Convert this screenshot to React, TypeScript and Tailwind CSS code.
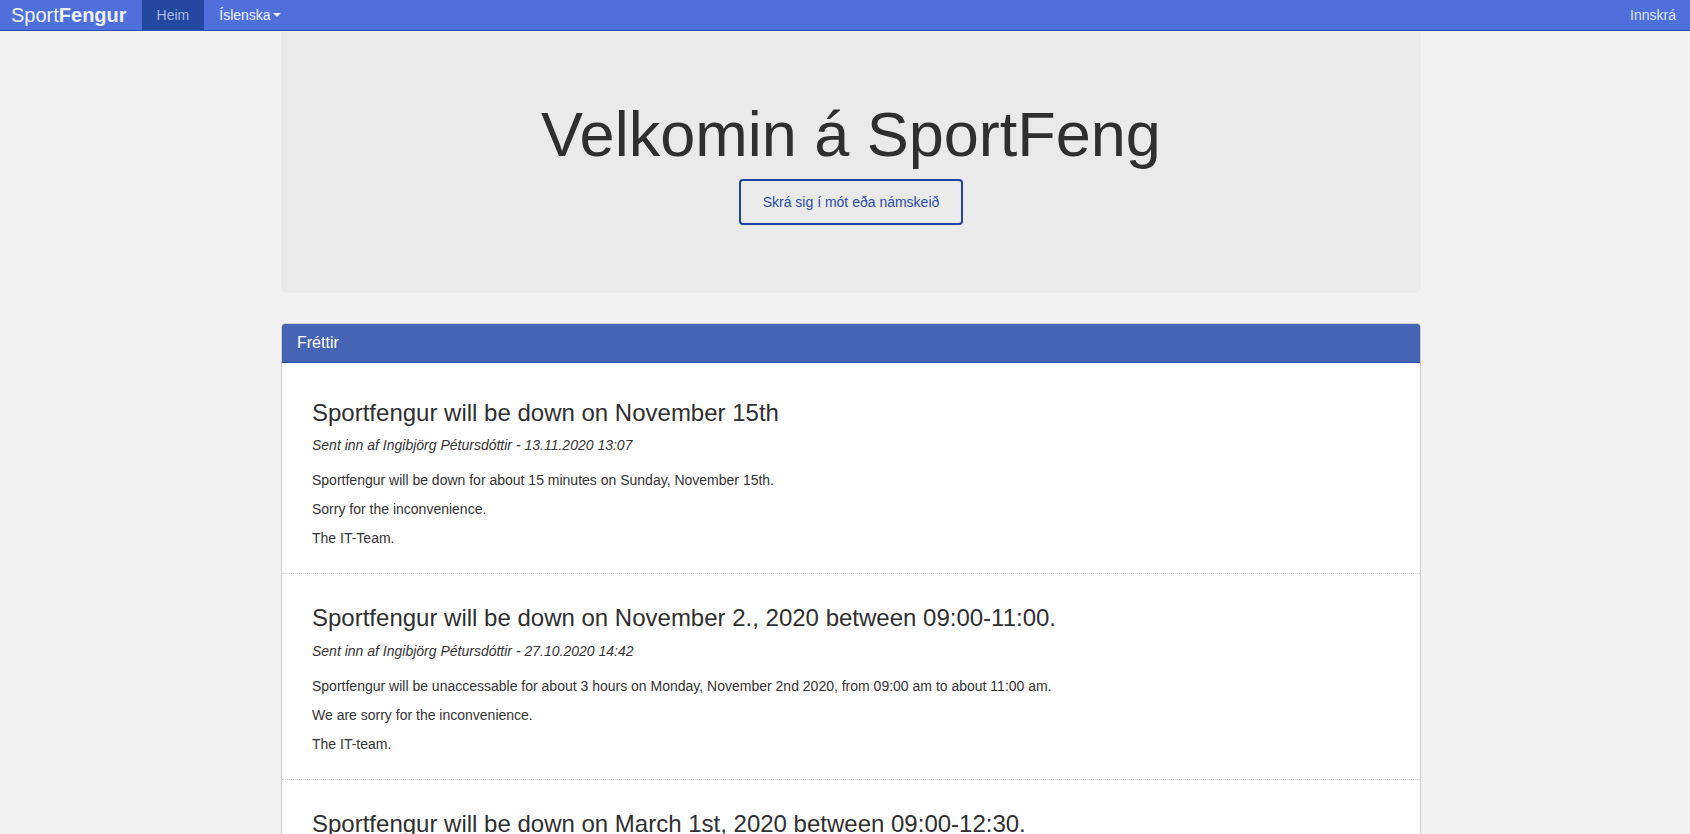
import { useState } from 'react';

type NewsItem = {
  title: string;
  author: string;
  date: string;
  body: string[];
};

const news: NewsItem[] = [
  {
    title: 'Sportfengur will be down on November 15th',
    author: 'Ingibjörg Pétursdóttir',
    date: '13.11.2020 13:07',
    body: [
      'Sportfengur will be down for about 15 minutes on Sunday, November 15th.',
      'Sorry for the inconvenience.',
      'The IT-Team.',
    ],
  },
  {
    title: 'Sportfengur will be down on November 2., 2020 between 09:00-11:00.',
    author: 'Ingibjörg Pétursdóttir',
    date: '27.10.2020 14:42',
    body: [
      'Sportfengur will be unaccessable for about 3 hours on Monday, November 2nd 2020, from 09:00 am to about 11:00 am.',
      'We are sorry for the inconvenience.',
      'The IT-team.',
    ],
  },
  {
    title: 'Sportfengur will be down on March 1st, 2020 between 09:00-12:30.',
    author: 'Ingibjörg Pétursdóttir',
    date: '26.02.2020 10:15',
    body: [
      'Sportfengur will be unaccessable on Sunday, March 1st 2020, from 09:00 am to about 12:30 pm.',
      'We are sorry for the inconvenience.',
      'The IT-team.',
    ],
  },
];

function Navbar() {
  const [open, setOpen] = useState(false);

  return (
    <nav className="flex h-[31px] items-stretch justify-between border-b border-[#2f4fae] bg-[#4f6fdb] text-[14px]">
      <div className="flex items-stretch">
        <a href="#" className="flex items-center pl-[11px] pr-[15px] text-[20px] leading-none text-[#eef1fb]">
          Sport<span className="font-bold">Fengur</span>
        </a>
        <a href="#" className="flex items-center bg-[#2447a0] px-[15px] leading-5 text-[#a9b8e4]">
          Heim
        </a>
        <button
          onClick={() => setOpen(!open)}
          className="flex items-center px-[15px] leading-5 text-[#eef1fb]"
        >
          Íslenska
          <span className="ml-[2px] inline-block h-0 w-0 border-x-[4px] border-t-[4px] border-x-transparent border-t-[#eef1fb]" />
        </button>
      </div>
      <a href="#" className="flex items-center px-[14px] leading-5 text-[#dce3f7]">
        Innskrá
      </a>
    </nav>
  );
}

function NewsEntry({ item, first }: { item: NewsItem; first: boolean }) {
  return (
    <div
      className={
        first
          ? 'border-b border-dotted border-[#cfcfcf] px-[30px] pb-[16px] pt-[37px]'
          : 'border-b border-dotted border-[#cfcfcf] px-[30px] pb-[16px] pt-[31px]'
      }
    >
      <h3 className="mb-[9px] text-[24px] leading-[1.1] text-[#2f2f2f]">{item.title}</h3>
      <p className="mb-[15px] italic leading-5">
        Sent inn af {item.author} - {item.date}
      </p>
      {item.body.map((line, i) => (
        <p key={i} className="mb-[9px] leading-5">
          {line}
        </p>
      ))}
    </div>
  );
}

function App() {
  return (
    <div className="min-h-screen bg-[#f2f2f2] font-['Liberation_Sans',Arial,sans-serif] text-[14px] text-[#333]">
      <Navbar />

      <div className="flex justify-center pl-[12px]">
        <div className="w-[1140px]">
          <div className="mt-px mb-[30px] flex flex-col items-center rounded-b-md bg-[#eaeaea] pt-[68px] pb-[68px]">
            <h1 className="mb-[10px] text-[63px] leading-[1.1] text-[#2f2f2f]">Velkomin á SportFeng</h1>
            <a
              href="#"
              className="rounded-[4px] border-2 border-[#1f44a3] px-[22px] py-[11px] leading-5 text-[#2a4aa8]"
            >
              Skrá sig í mót eða námskeið
            </a>
          </div>

          <div className="overflow-hidden rounded-t-[4px] border border-[#cdcdcd] bg-white">
            <div className="border-b border-[#2c4ca4] bg-[#4565b4] px-[15px] py-[10px] text-[16px] leading-[1.1] text-white">
              Fréttir
            </div>
            <div>
              {news.map((item, i) => (
                <NewsEntry key={i} item={item} first={i === 0} />
              ))}
            </div>
          </div>
        </div>
      </div>
    </div>
  );
}

export default App;
